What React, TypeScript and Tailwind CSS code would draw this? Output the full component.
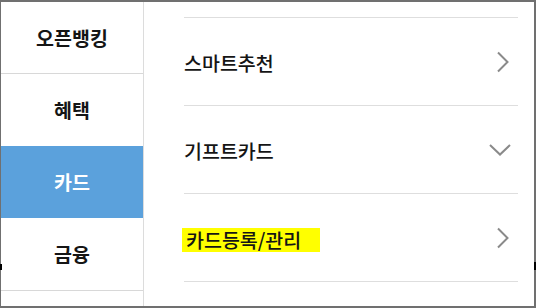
import React from "react";

const navItems = [
  { label: "오픈뱅킹", h: "h-[72px]", border: true },
  { label: "혜택", h: "h-[72px]", border: false },
  { label: "카드", h: "h-[72px]", border: false, active: true },
  { label: "금융", h: "h-[73px]", border: true },
];

function ChevronRight() {
  return (
    <svg width="14" height="22" viewBox="0 0 14 22" fill="none">
      <path d="M2 1.5 L11.5 11 L2 20.5" stroke="#8a8a8a" strokeWidth="2" />
    </svg>
  );
}

function ChevronDown() {
  return (
    <svg width="22" height="12" viewBox="0 0 22 12" fill="none">
      <path d="M1 1 L11 10.5 L21 1" stroke="#8a8a8a" strokeWidth="2" />
    </svg>
  );
}

export default function App() {
  return (
    <div
      className="relative flex h-[308px] w-[536px] border-t-2 border-b-2 border-l border-r-2 border-[#707070] bg-white text-[#151515]"
      style={{ fontFamily: '"Noto Sans CJK KR", "Noto Sans", sans-serif' }}
    >
      <span className="absolute left-[-1px] top-[262px] h-[6px] w-[2px] bg-black" />
      <span className="absolute right-[-2px] top-[260px] h-[8px] w-[2px] bg-black" />

      <nav className="flex w-[143px] shrink-0 flex-col border-r border-[#dcdcdc]">
        {navItems.map((item) => (
          <div
            key={item.label}
            className={`flex ${item.h} items-center justify-center text-[19.5px] font-semibold ${
              item.border ? "border-b border-[#d8d8d8]" : ""
            } ${item.active ? "bg-[#5ba1dc] text-white" : ""}`}
          >
            {item.label}
          </div>
        ))}
      </nav>

      <div className="flex flex-1 flex-col pl-[40px] pr-[16px] pt-[15px]">
        <div className="border-t border-[#dedede]">
          <div className="flex h-[88px] items-center justify-between border-b border-[#dedede] pr-[8px]">
            <span className="pt-[2px] text-[19.5px] font-medium">스마트추천</span>
            <ChevronRight />
          </div>
          <div className="flex h-[88px] items-center justify-between border-b border-[#dedede] pr-[7px]">
            <span className="pt-[2px] text-[19.5px] font-medium">기프트카드</span>
            <ChevronDown />
          </div>
          <div className="flex h-[88px] items-center justify-between border-b border-[#dedede] pr-[8px]">
            <span className="-ml-[2px] mt-[4px] w-[138px] bg-[#ffff00] pl-[4px] text-[19.5px] font-medium leading-[24px]">
              카드등록/관리
            </span>
            <ChevronRight />
          </div>
        </div>
      </div>
    </div>
  );
}
